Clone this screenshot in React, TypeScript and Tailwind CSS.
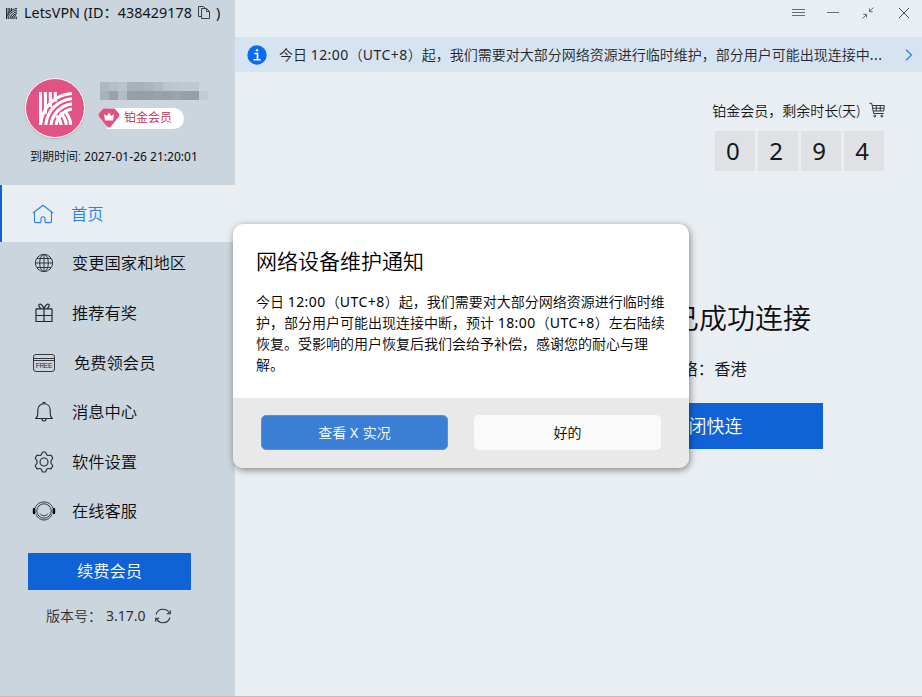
import type { ReactNode } from 'react';

// Latin runs use the regular weight next to the lighter CJK text
function Latin({ children }: { children: ReactNode }) {
  return <span className="font-normal tracking-[0.480px]">{children}</span>;
}

function BrandMark({ className, stroke }: { className: string; stroke: number }) {
  return (
    <svg viewBox="0 0 32 32" className={className} fill="none" stroke="currentColor" strokeWidth={stroke}>
      <path d="M1.400 0v32M6.200 0v21M11 0v14.500M15.800 0v9.500" />
      <path d="M1.500 32C3 17 13 3 32 1.500" />
      <path d="M6.500 32C8 19 17 8 32 6.500" />
      <path d="M11.500 32C13 22 20 13 32 11.500" />
      <path d="M16.500 32C17.500 25 23 18 32 16.500" />
      <path d="M16.500 23c3 2 4.500 5 5 9M20.500 20c3 3 5.500 7 6 12M24.500 18c3.500 4 6 8.500 6.300 14" />
    </svg>
  );
}

function HomeIcon() {
  return (
    <svg viewBox="0 0 22 20" className="w-[22px] h-5" fill="none" stroke="currentColor" strokeWidth="1.100" strokeLinejoin="round" strokeLinecap="round">
      <path d="M1.300 8.800 11 1.200l9.700 7.600" />
      <path d="M2.500 8v9.300q0 1.300 1.300 1.300h4.400q.8 0 .8-.8v-3q0-2 2-2t2 2v3q0 .8.8.8h4.400q1.300 0 1.300-1.300V8" />
    </svg>
  );
}

function GlobeIcon() {
  return (
    <svg viewBox="0 0 20 20" className="w-5 h-5" fill="none" stroke="currentColor" strokeWidth=".9">
      <circle cx="10" cy="10" r="8.600" />
      <ellipse cx="10" cy="10" rx="4.300" ry="8.600" />
      <path d="M10 1.300v17.400M1.300 10h17.400M3 5.500h14M3 14.500h14" />
    </svg>
  );
}

function GiftIcon() {
  return (
    <svg viewBox="0 0 20 20" className="w-5 h-5" fill="none" stroke="currentColor" strokeWidth="1.200" strokeLinejoin="round">
      <path d="M2 5.800h16v12.700H2zM2 12.500h16M10 5.500v13" />
      <path d="M10 5.500C8.500 2.500 7 .8 5.500 1.300 4 2 5 4.500 7 5.500M10 5.500C11.500 2.500 13 .8 14.500 1.300 16 2 15 4.500 13 5.500" />
    </svg>
  );
}

function FreeIcon() {
  return (
    <svg viewBox="0 0 22 18" className="w-[22px] h-[18px]" fill="none" stroke="currentColor" strokeWidth=".9">
      <rect x=".5" y=".5" width="21" height="17" rx="2.500" />
      <path d="M.5 4.500h21M.5 6.500h21" />
      <text x="11" y="14.300" textAnchor="middle" fontSize="6.500" fontFamily="Liberation Sans, sans-serif" fill="currentColor" stroke="none" textLength="16.500">FREE</text>
    </svg>
  );
}

function BellIcon() {
  return (
    <svg viewBox="0 0 20 22" className="w-5 h-[22px]" fill="none" stroke="currentColor" strokeWidth="1.100" strokeLinejoin="round">
      <path d="M1.700 17.500h16.600c-1.600-1.300-2.100-3-2.100-5V9c0-3.500-2.400-6.200-6.200-6.200S3.800 5.500 3.800 9v3.500c0 2-.5 3.700-2.100 5z" />
      <path d="M9 2.600V1.500h2v1.100M8 18c0 2.600 4 2.600 4 0" />
    </svg>
  );
}

function GearIcon() {
  return (
    <svg viewBox="0 0 22 22" className="w-[22px] h-[22px]" fill="none" stroke="currentColor" strokeWidth="1.100" strokeLinejoin="round">
      <circle cx="11" cy="11" r="4" />
      <path d="M9 2.200Q9.200 1 10 1h2q.8 0 1 1.200c.4 2 1.800 2.800 3.700 2.100q1.200-.4 1.600.3l1.300 2.200q.4.700-.6 1.500c-1.500 1.300-1.500 4.100 0 5.400q1 .8.600 1.500l-1.300 2.200q-.4.700-1.600.3c-1.900-.7-3.300.1-3.700 2.100Q12.800 21 12 21h-2q-.8 0-1-1.200c-.4-2-1.800-2.800-3.700-2.100q-1.200.4-1.600-.3l-1.300-2.200q-.4-.7.600-1.500c1.500-1.300 1.500-4.100 0-5.400q-1-.8-.6-1.500l1.300-2.200q.4-.7 1.600-.3C7.200 5 8.600 4.200 9 2.200z" />
    </svg>
  );
}

function ServiceIcon() {
  return (
    <svg viewBox="0 0 24 20" className="-mt-px w-6 h-5" fill="none" stroke="currentColor" strokeWidth=".9">
      <circle cx="12" cy="10" r="7.200" />
      <path d="M3 7C5 2.500 8.500 1 12 1s7 1.500 9 6M4 13.500C6 17.500 9 19 12 19s6-1.500 8-5.500M8 12.500c1.800 3 6.200 3 8 0" />
      <path d="M2.100 8.300v3.600M21.900 8.300v3.600" stroke="#000" strokeWidth="2.600" strokeLinecap="round" />
    </svg>
  );
}

const menu = [
  { label: '变更国家和地区', icon: <GlobeIcon /> },
  { label: '推荐有奖', icon: <GiftIcon /> },
  { label: '免费领会员', icon: <FreeIcon /> },
  { label: '消息中心', icon: <BellIcon /> },
  { label: '软件设置', icon: <GearIcon /> },
  { label: '在线客服', icon: <ServiceIcon /> },
];

// Pixelated user name
const maskTop = ['#b0b8bf', '#b6bec6', '#bac3cb', '#a9b1b9', '#a9b1b8', '#adb5bc', '#b3bbc2', '#bcc4cb', '#bfc7ce', '#c0c9d0', '#c0c8d0', '#cad5de'];
const maskBottom = ['#aab2b9', '#9ba3aa', '#b4bcc3', '#989fa6', '#969da4', '#999fa6', '#9aa1a7', '#999fa6', '#9da3a9', '#989fa5', '#979ea4', '#c2cbd3'];

function Sidebar() {
  return (
    <aside className="flex w-[235px] shrink-0 flex-col bg-[#cad5de]">
      <div className="flex h-[26px] items-center pl-[6px] text-[14.300px] text-[#111418]">
        <BrandMark className="w-[11px] h-[11px]" stroke={2.600} />
        <span className="ml-[7px] whitespace-pre font-normal tracking-[0.050px]">LetsVPN (ID：438429178</span>
        <svg viewBox="0 0 12 14" className="ml-[6px] w-3 h-[14px]" fill="none" stroke="#3a4046" strokeWidth="1">
          <path d="M3.500 10.500h-3v-10h5l2 2M3.500 2.500h5l3 3v7h-8zM8.500 2.500v3h3" />
        </svg>
        <span className="ml-[6px] font-normal">)</span>
      </div>

      <div className="flex h-[159px] flex-col pt-[52px]">
        <div className="flex">
          <div className="ml-[25px] flex h-[60px] w-[60px] items-center justify-center rounded-full border border-white bg-[#e15285] text-white shadow-sm">
            <BrandMark className="w-[33px] h-[33px]" stroke={3} />
          </div>
          <div className="ml-[13px] flex flex-col pt-[4px]">
            <div className="ml-[2px] grid w-[108px] grid-cols-12">
              {[...maskTop, ...maskBottom].map((c, i) => (
                <span key={i} className="h-[9px]" style={{ backgroundColor: c }} />
              ))}
            </div>
            <div className="mt-[7px] flex h-[22px] w-[86px] items-center">
              <svg viewBox="0 0 22 22" className="z-10 w-[22px] h-[22px] shrink-0">
                <path d="M5.500 1.500h11L21 6.500q1 1.500 0 3L13 19.500q-2 2-4 0L1 9.500q-1-1.500 0-3z" fill="#df5180" />
                <path d="m6 7 2.700 2L11 5.500 13.300 9 16 7l-1 6.500H7z" fill="#fff" />
              </svg>
              <span className="-ml-[13px] flex h-[21px] flex-1 items-center rounded-r-full bg-white pl-[17px] text-[12px] text-[#b8304f]">铂金会员</span>
            </div>
          </div>
        </div>
        <p className="ml-[30px] mt-[10px] text-[12px] leading-[18px] whitespace-nowrap text-[#0b0d10]">
          到期时间: <span className="font-normal tracking-[0.020px]">2027-01-26 21:20:01</span>
        </p>
      </div>

      <nav className="flex flex-col text-[16.300px] text-[#0b0d10]">
        <a className="flex h-[57px] items-center border-l-2 border-[#1063d6] bg-[#e9eef2] pl-[30px] text-[#2b7fe6]">
          <HomeIcon />
          <span className="ml-[17px] mt-px">首页</span>
        </a>
        <div className="flex flex-col">
          {menu.map((m, i) => (
            <a key={m.label} className={i === 0 ? 'flex h-[46.500px] items-center pb-1' : 'flex h-[49.600px] items-center'}>
              <span className="ml-[31px] flex w-[26px] justify-center text-[#23282d]">{m.icon}</span>
              <span className={m.label === '免费领会员' ? 'ml-[17px]' : 'ml-[15px]'}>{m.label}</span>
            </a>
          ))}
        </div>
      </nav>

      <button className="ml-7 mt-[16.500px] h-[37px] w-[163px] bg-[#1063d6] text-[16.300px] text-white">续费会员</button>
      <div className="ml-[46px] mt-[14px] flex h-6 items-center text-[14px] text-[#2e3338]">
        <span>版本号：</span>
        <span className="ml-[4px] font-normal">3.17.0</span>
        <svg viewBox="0 0 16 16" className="ml-[9px] w-4 h-4" fill="none" stroke="currentColor" strokeWidth="1.100">
          <path d="M1 6.500C2 3 5 1.200 8 1.200c3 0 5.500 1.600 6.600 4.500M15 9.500C14 13 11 14.800 8 14.800c-3 0-5.500-1.600-6.600-4.500" />
          <path d="M15.300 2.200v3.600h-3.600M.7 13.800v-3.600h3.600" />
        </svg>
      </div>
    </aside>
  );
}

function Main() {
  return (
    <main className="flex min-w-0 flex-1 flex-col bg-[#e9eef2] text-[#14171a]">
      <div className="flex h-[37px] items-start justify-end pr-3 pt-[6px] text-[#686d72]">
        <svg viewBox="0 0 13 14" className="w-[13px] h-[14px]" stroke="currentColor"><path d="M0 3.500h13M0 6.500h13M0 9.500h13" /></svg>
        <svg viewBox="0 0 12 14" className="ml-[22px] w-[12px] h-[14px]" stroke="currentColor"><path d="M0 6.500h12" /></svg>
        <svg viewBox="0 0 12 14" className="ml-[23px] w-[12px] h-[14px]" fill="none" stroke="currentColor">
          <path d="M11.500 1.500 7.500 5.500M7.500 2.500v3.200h3.200M.5 12.500l4-4M1.300 8.300h3.200v3.200" />
        </svg>
        <svg viewBox="0 0 12 14" className="ml-[24px] w-[12px] h-[14px]" stroke="#4a4f54"><path d="m1 2 10 10M11 2 1 12" /></svg>
      </div>

      <div className="flex h-[35px] shrink-0 items-center bg-[#d6e3f0]">
        <svg viewBox="0 0 20 20" className="ml-[12px] w-5 h-5 shrink-0">
          <circle cx="10" cy="10" r="9.700" fill="#0a6cf5" />
          <path d="M7.300 8.500h3.200v6M6.500 14.700h7.200" fill="none" stroke="#fff" strokeWidth="1.600" />
          <circle cx="10" cy="5.300" r="1.200" fill="#fff" />
        </svg>
        <span className="ml-[12px] text-[14px] whitespace-nowrap text-[#22272c]">
          今日 <Latin>12:00</Latin>（<Latin>UTC+8</Latin>）起，我们需要对大部分网络资源进行临时维护，部分用户可能出现连接中<Latin>...</Latin>
        </span>
        <svg viewBox="0 0 8 12" className="ml-auto mr-[9px] w-2 h-3" fill="none" stroke="#2b82ea" strokeWidth="1.300"><path d="m1 .7 5.500 5.300L1 11.300" /></svg>
      </div>

      <div className="flex flex-col items-end pr-[38px] pt-[27px]">
        <div className="flex h-[22px] items-center text-[14px] whitespace-nowrap">
          <span>铂金会员，剩余时长(天)</span>
          <svg viewBox="0 0 16 16" className="ml-[9px] -mr-[1px] w-4 h-4" fill="none" stroke="#33383d" strokeWidth="1">
            <path d="M.3 1.300h2.400l2 10.200h10M3 3.500h12.300l-.5 5.500H4.300M3.500 6.200h11.500M7.300 3.500V9M11.300 3.500V9" />
            <circle cx="5.800" cy="14" r="1" />
            <circle cx="12.800" cy="14" r="1" />
          </svg>
        </div>
        <div className="mt-[10px] flex gap-[3.500px]">
          {['0', '2', '9', '4'].map((d) => (
            <span key={d} className="flex h-10 w-[39.600px] items-center justify-center bg-[#e0e1e5] pr-[4px] text-[24px] font-normal">{d}</span>
          ))}
        </div>
      </div>

      <div className="ml-auto mr-[99px] mt-[127px] flex w-[234px] flex-col items-center">
        <h1 className="self-end pr-[12px] text-[28px] leading-10 whitespace-nowrap text-[#0b0d10]">已成功连接</h1>
        <p className="mt-[19px] text-[16.300px] leading-6 text-[#0b0d10]">网络：香港</p>
        <button className="mt-[22px] h-[46px] w-full bg-[#1063d6] pl-px text-[18px] text-white">关闭快连</button>
      </div>
    </main>
  );
}

function NoticeDialog() {
  return (
    <div className="absolute left-[233px] top-[224px] flex h-[244px] w-[456px] flex-col overflow-hidden rounded-[10px] bg-white text-black shadow-[1px_2px_7px_rgba(0,0,0,0.45)]">
      <div className="flex-1 pl-[23px] pt-[21px]">
        <h2 className="text-[21px] leading-8">网络设备维护通知</h2>
        <p className="mt-[14px] text-[14px] leading-[21px] whitespace-nowrap">
          今日 <Latin>12:00</Latin>（<Latin>UTC+8</Latin>）起，我们需要对大部分网络资源进行临时维<br />
          护，部分用户可能出现连接中断，预计 <Latin>18:00</Latin>（<Latin>UTC+8</Latin>）左右陆续<br />
          恢复。受影响的用户恢复后我们会给予补偿，感谢您的耐心与理<br />
          解。
        </p>
      </div>
      <div className="flex h-[70px] gap-[26px] bg-[#e9e9e9] pl-7 pt-[17px] text-[14px]">
        <button className="h-[35px] w-[187px] rounded-[5px] border border-[#5c8fd6] bg-[#3b7ed6] text-white">查看 <Latin>X </Latin>实况</button>
        <button className="h-[35px] w-[187px] rounded-[5px] bg-[#fafafa]">好的</button>
      </div>
    </div>
  );
}

export default function App() {
  return (
    <div className="relative flex h-[697px] w-[922px] overflow-hidden border-b border-[#d9b3ba] font-[350] font-['Noto_Sans','Noto_Sans_CJK_SC',sans-serif]">
      <Sidebar />
      <Main />
      <NoticeDialog />
    </div>
  );
}
